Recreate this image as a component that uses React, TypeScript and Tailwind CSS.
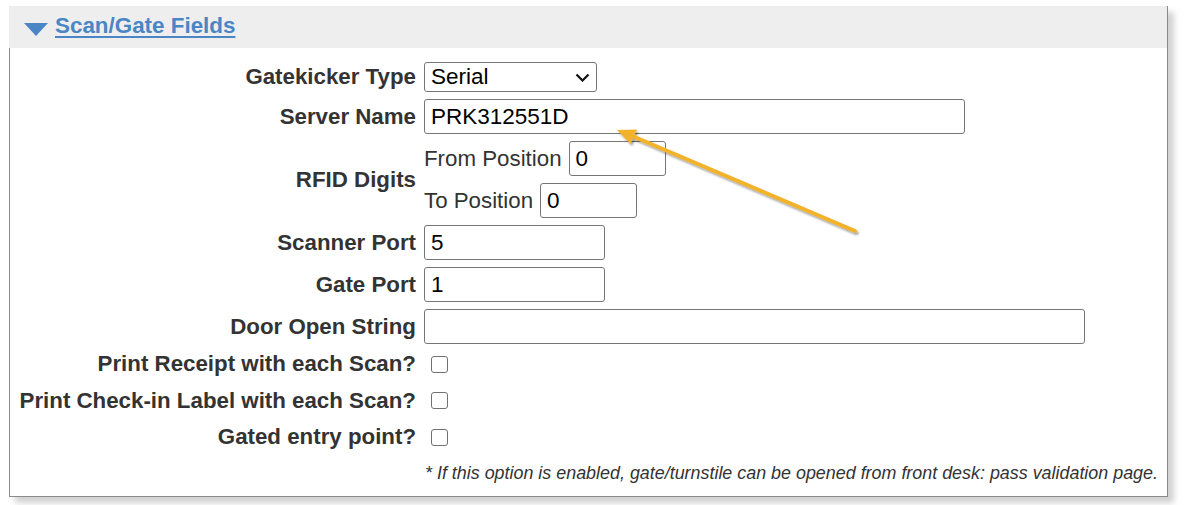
import React from "react";

const font = { fontFamily: '"Liberation Sans", Arial, sans-serif' };

function Label({ children }: { children: React.ReactNode }) {
  return (
    <div className="w-[406px] shrink-0 text-right text-[22.3px] font-bold leading-[26px] text-[#333333]">
      {children}
    </div>
  );
}

function TextInput({ value, w }: { value: string; w: string }) {
  return (
    <input
      readOnly
      value={value}
      className={`${w} h-[35px] rounded-[3px] border border-[#767676] bg-white pl-[6px] text-[22.5px] text-black outline-none`}
      style={font}
    />
  );
}

function Check() {
  return (
    <span className="ml-[7px] block h-[17px] w-[17px] rounded-[3px] border border-[#707070] bg-white" />
  );
}

export default function App() {
  return (
    <div className="relative h-[505px] w-[1188px] bg-white" style={font}>
      <div className="ml-[9px] mt-[6px] w-[1159px] shadow-[6px_6px_6px_rgba(0,0,0,0.18)]">
        {/* Header */}
        <div className="flex h-[42px] items-start border-r border-[#8a8a8a] bg-[#eeeeee] pl-[15px] pt-[7px]">
          <svg width="24" height="13" viewBox="0 0 24 13" className="mt-[10px] shrink-0">
            <polygon points="0,0 24,0 12,13" fill="#4a86c6" />
          </svg>
          <span className="ml-[7px] text-[22.4px] font-bold leading-[26px] text-[#4a86c6] underline decoration-[2px] underline-offset-[3px]">
            Scan/Gate Fields
          </span>
        </div>

        {/* Body */}
        <div className="flex flex-col border-b border-l border-r border-[#8a8a8a] bg-white pb-[12px] pt-[14px]">
          {/* Gatekicker Type */}
          <div className="flex h-[30px] items-center gap-[8px]">
            <Label>Gatekicker Type</Label>
            <div className="relative h-[30px] w-[173px]">
              <select
                className="h-[30px] w-[173px] appearance-none rounded-[3px] border border-[#767676] bg-white pl-[6px] text-[22.5px] leading-[26px] text-black outline-none"
                style={font}
                defaultValue="Serial"
              >
                <option>Serial</option>
                <option>Network</option>
              </select>
              <svg
                width="15"
                height="9"
                viewBox="0 0 15 9"
                className="pointer-events-none absolute left-[151px] top-[11px]"
              >
                <polyline points="1.5,1.5 7.5,7.5 13.5,1.5" fill="none" stroke="#111" strokeWidth="2.2" />
              </svg>
            </div>
          </div>

          {/* Server Name */}
          <div className="mt-[7px] flex h-[35px] items-center gap-[8px]">
            <Label>Server Name</Label>
            <TextInput value="PRK312551D" w="w-[541px]" />
          </div>

          {/* RFID Digits */}
          <div className="mt-[7px] flex items-center gap-[8px]">
            <Label>RFID Digits</Label>
            <div className="flex flex-col gap-[7px]">
              <div className="flex h-[35px] items-center gap-[7px]">
                <span className="text-[22.3px] leading-[26px] text-[#333333]">From Position</span>
                <TextInput value="0" w="w-[97px]" />
              </div>
              <div className="flex h-[35px] items-center gap-[7px]">
                <span className="text-[22.3px] leading-[26px] text-[#333333]">To Position</span>
                <TextInput value="0" w="w-[97px]" />
              </div>
            </div>
          </div>

          {/* Scanner Port */}
          <div className="mt-[7px] flex h-[35px] items-center gap-[8px]">
            <Label>Scanner Port</Label>
            <TextInput value="5" w="w-[181px]" />
          </div>

          {/* Gate Port */}
          <div className="mt-[7px] flex h-[35px] items-center gap-[8px]">
            <Label>Gate Port</Label>
            <TextInput value="1" w="w-[181px]" />
          </div>

          {/* Door Open String */}
          <div className="mt-[7px] flex h-[35px] items-center gap-[8px]">
            <Label>Door Open String</Label>
            <TextInput value="" w="w-[661px]" />
          </div>

          {/* Checkboxes */}
          <div className="mt-[2px] flex h-[36.5px] items-center gap-[8px]">
            <Label>Print Receipt with each Scan?</Label>
            <Check />
          </div>
          <div className="flex h-[36.5px] items-center gap-[8px]">
            <Label>Print Check-in Label with each Scan?</Label>
            <Check />
          </div>
          <div className="flex h-[36.5px] items-center gap-[8px]">
            <Label>Gated entry point?</Label>
            <Check />
          </div>

          {/* Footnote */}
          <div className="mt-[7px] flex gap-[8px]">
            <div className="w-[406px] shrink-0" />
            <p className="whitespace-nowrap pl-[1px] text-[17.9px] italic leading-[21px] text-[#333333]">
              * If this option is enabled, gate/turnstile can be opened from front desk: pass validation page.
            </p>
          </div>
        </div>
      </div>

      {/* Annotation arrow */}
      <svg
        className="pointer-events-none absolute left-0 top-0"
        width="1188"
        height="505"
        viewBox="0 0 1188 505"
      >
        <defs>
          <filter id="arrowShadow" x="-20%" y="-20%" width="140%" height="140%">
            <feDropShadow dx="1.5" dy="2" stdDeviation="1.2" floodColor="#000" floodOpacity="0.4" />
          </filter>
        </defs>
        <g filter="url(#arrowShadow)">
          <line x1="855" y1="225" x2="631" y2="129.5" stroke="#f2b22c" strokeWidth="4" strokeLinecap="round" />
          <polygon points="617,124 637,123.5 630.5,138" fill="#f2b22c" />
        </g>
      </svg>
    </div>
  );
}
